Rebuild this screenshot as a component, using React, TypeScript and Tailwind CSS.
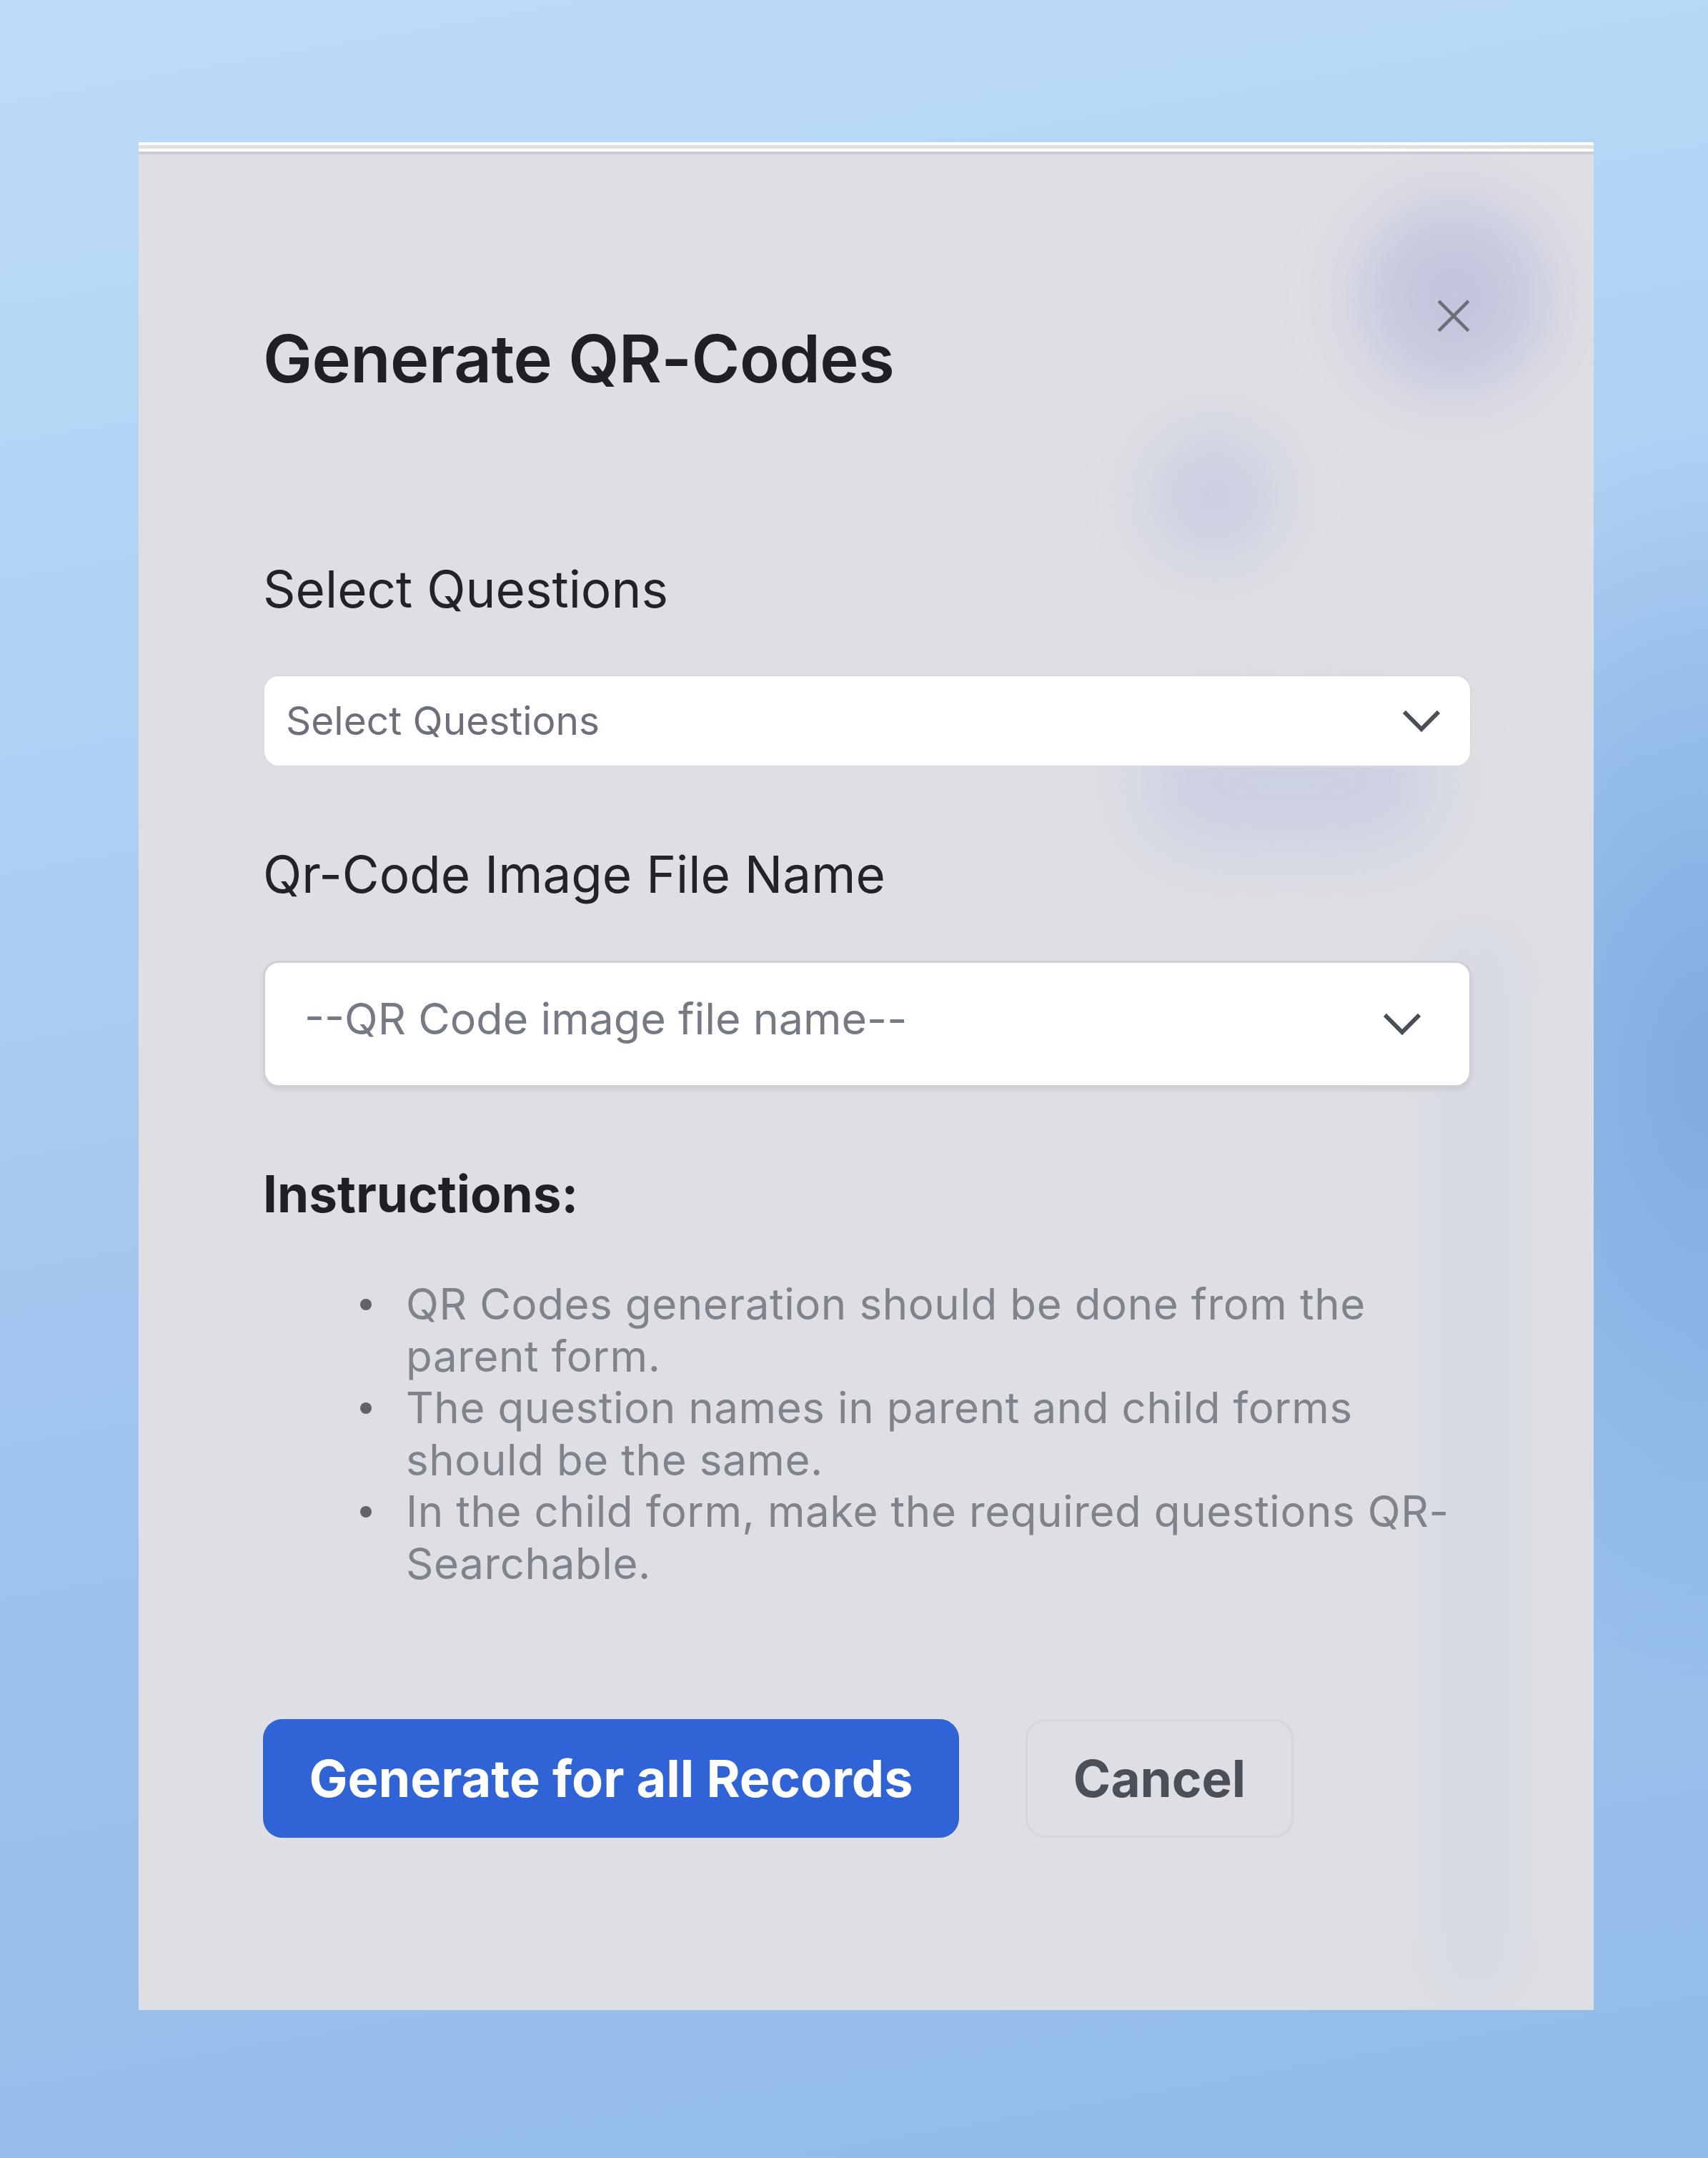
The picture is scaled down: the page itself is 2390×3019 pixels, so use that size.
import React from 'react';

const font = { fontFamily: 'Inter, "Noto Sans", "Liberation Sans", sans-serif' };

const instructions = [
  'QR Codes generation should be done from the parent form.',
  'The question names in parent and child forms should be the same.',
  'In the child form, make the required questions QR-Searchable.',
];

function Chevron({ className = '' }: { className?: string }) {
  return (
    <svg viewBox="0 0 24 24" fill="none" stroke="currentColor" strokeWidth={1.6} strokeLinecap="square" className={className}>
      <path d="m6 9 6 6 6-6" />
    </svg>
  );
}

export default function App() {
  return (
    <div
      className="w-[2390px] h-[3019px] pt-[199px] pl-[194px] bg-[radial-gradient(ellipse_500px_900px_at_2390px_1500px,#80ace0_0%,rgba(128,172,224,0)_100%),linear-gradient(170deg,#bddcf8_0%,#b2d3f5_25%,#9fc4ee_60%,#93bbe8_100%)]"
      style={font}
    >
      <div className="relative w-[2036px] h-[2613px] bg-[#dedfe4] overflow-hidden">
        {/* top strip */}
        <div className="h-[4px] bg-white" />
        <div className="h-[5px] bg-[#e1e2df]" />
        <div className="h-[4px] bg-white" />
        <div className="h-[4px] bg-[#c9cdd3]" />

        {/* soft glows */}
        <div className="absolute left-[1705px] top-[80px] w-[270px] h-[270px] rounded-full bg-[#b9bbdc] opacity-70 blur-[50px]" />
        <div className="absolute left-[1410px] top-[400px] w-[190px] h-[190px] rounded-full bg-[#c3c8e0] opacity-70 blur-[45px]" />
        <div className="absolute left-[1400px] top-[800px] w-[420px] h-[190px] rounded-full bg-[#c6cce2] opacity-80 blur-[50px]" />
        <div className="absolute left-[1800px] top-[1100px] w-[140px] h-[1500px] bg-[#d3d7e3] opacity-60 blur-[40px]" />

        <button className="absolute left-[1815px] top-[218px] w-[50px] h-[50px] text-[#6b7078]">
          <svg viewBox="0 0 24 24" fill="none" stroke="currentColor" strokeWidth={2.2} className="w-full h-full">
            <path d="M2 2 22 22M22 2 2 22" />
          </svg>
        </button>

        <div className="relative pl-[174px] pr-[171px] pt-[231px]">
          <h2 className="text-[92px] leading-[110px] font-semibold text-[#1f2023] tracking-[-0.5px]">
            Generate QR-Codes
          </h2>

          <div className="mt-[225px] text-[71px] leading-[85px] text-[#222327]">Select Questions</div>
          <div className="mt-[77px] h-[129px] flex items-center justify-between bg-white rounded-[22px] border-2 border-[#d8dadf] pl-[30px] pr-[42px]">
            <span className="text-[55px] text-[#6b7079]">Select Questions</span>
            <Chevron className="w-[88px] h-[88px] -mr-[18px] text-[#4a4f56]" />
          </div>

          <div className="mt-[108px] text-[71px] leading-[85px] text-[#222327]">Qr-Code Image File Name</div>
          <div className="mt-[78px] h-[177px] flex items-center justify-between bg-white rounded-[22px] border-[3px] border-[#cfd0d4] shadow-[0_4px_6px_rgba(0,0,0,0.08)] pl-[55px] pr-[68px] pb-[14px]">
            <span className="text-[61px] text-[#767b83]">--QR Code image file name--</span>
            <Chevron className="w-[88px] h-[88px] -mr-[18px] mt-[14px] text-[#4a4f56]" />
          </div>

          <div className="mt-[108px] text-[71px] leading-[82px] font-bold text-[#1f2023]">Instructions:</div>
          <ul className="mt-[77px]">
            {instructions.map((t) => (
              <li key={t} className="flex text-[60px] leading-[72.5px] tracking-[0.6px] text-[#7f838b]">
                <span className="w-[200px] shrink-0 flex justify-end pr-[48px] pt-[29px]">
                  <span className="w-[16px] h-[16px] rounded-full bg-[#5f636a]" />
                </span>
                <span>{t}</span>
              </li>
            ))}
          </ul>

          <div className="mt-[182px] flex gap-[93px]">
            <button className="w-[974px] h-[166px] rounded-[27px] bg-[#3063d5] text-white text-[72px] font-bold">
              Generate for all Records
            </button>
            <button className="w-[375px] h-[166px] rounded-[27px] border-[3px] border-[#d4d6db] text-[#4b5058] text-[71px] font-bold">
              Cancel
            </button>
          </div>
        </div>
      </div>
    </div>
  );
}
